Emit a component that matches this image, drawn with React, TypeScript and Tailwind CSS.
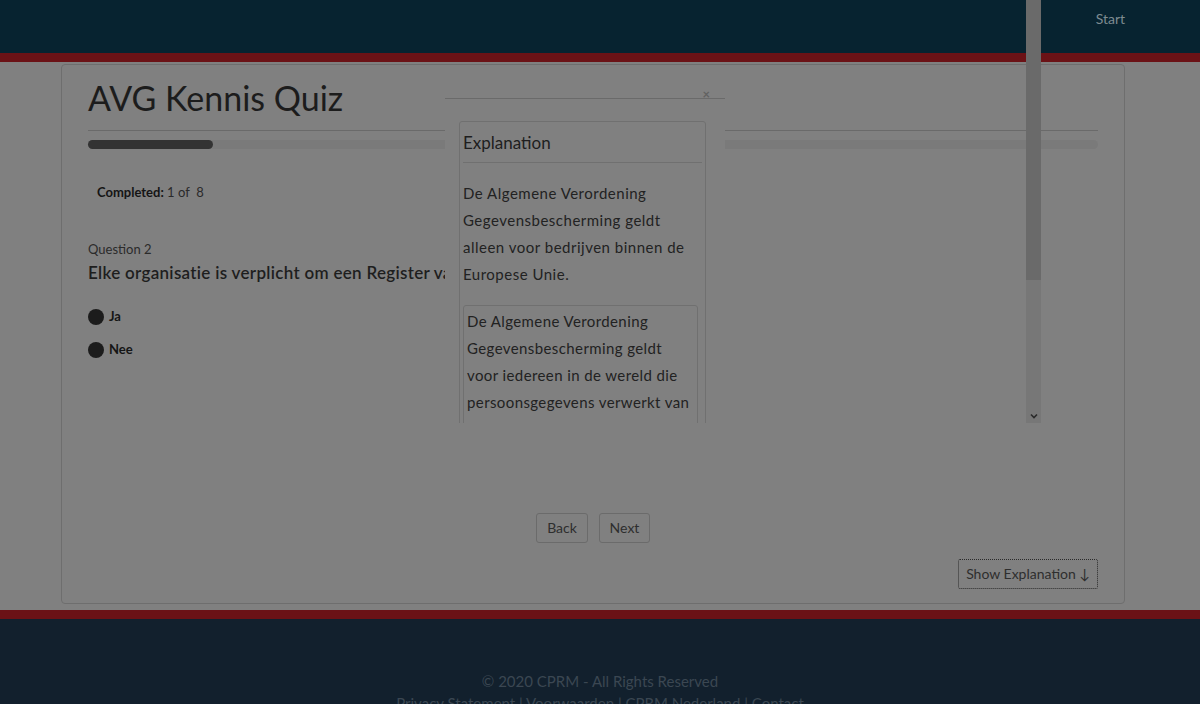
import React from "react";

const font = { fontFamily: "Lato, 'Open Sans', sans-serif" };

function Radio({ label }: { label: string }) {
  return (
    <label className="flex items-center gap-[5px] h-[20px]">
      <span className="w-[16px] h-[16px] rounded-full bg-[#1c1c1c]" />
      <span className="text-[13px] font-bold text-[#151515]">{label}</span>
    </label>
  );
}

function ExplanationModal() {
  return (
    <>
      <div className="absolute left-[445px] top-[66px] w-[280px] h-[357px] overflow-hidden bg-[#808080]">
        <div className="relative h-[33px] border-b border-[#6a6a6a]">
          <span className="absolute right-[15px] top-[22px] text-[13px] leading-none text-[#626262] font-bold">×</span>
        </div>
        <div className="ml-[14px] mt-[22px] w-[247px] border border-[#707070] rounded-[3px] px-[3px]">
          <div className="h-[41px] pt-[2px] flex items-center border-b border-[#707070] text-[17px] text-[#1e1e1e]">
            Explanation
          </div>
          <p className="pt-[17px] text-[15px] leading-[27px] tracking-[0.5px] text-[#222]">
            De Algemene Verordening Gegevensbescherming geldt alleen voor bedrijven binnen de Europese Unie.
          </p>
          <div className="mt-[17px] mr-[4px] border border-[#707070] rounded-[3px] px-[3px] pt-[2px]">
            <p className="text-[15px] leading-[27px] tracking-[0.4px] text-[#222]">
              De Algemene Verordening Gegevensbescherming geldt voor iedereen in de wereld die persoonsgegevens verwerkt van inwoners van de Europese Unie.
            </p>
          </div>
        </div>
      </div>

      {/* scrollbar of the modal */}
      <div className="absolute left-[1026px] top-0 w-[15px] h-[423px] bg-[#777777] flex flex-col">
        <div className="h-[280px] bg-[#6a6a6a]" />
        <div className="flex-1" />
        <div className="h-[15px] flex items-center justify-center">
          <svg width="8" height="6" viewBox="0 0 8 6">
            <path d="M1 1.5 L4 4.5 L7 1.5" fill="none" stroke="#2a2a2a" strokeWidth="1.6" />
          </svg>
        </div>
      </div>
    </>
  );
}

export default function App() {
  return (
    <div className="relative w-[1200px] h-[704px] overflow-hidden bg-[#808080]" style={font}>
      {/* Header */}
      <header className="h-[53px] bg-[#072330] flex items-center justify-end pr-[75px]">
        <span className="text-[14px] text-[#7e8b90] -mt-[17px]">Start</span>
      </header>
      <div className="h-[9px] bg-[#6b1216]" />

      {/* Main */}
      <main className="h-[548px] pt-[2px] px-[61px] pr-[75px]">
        <div className="h-[540px] border border-[#6e6e6e] rounded-[4px] px-[26px] pt-[13px] flex flex-col">
          <h1 className="text-[34px] leading-[40px] text-[#1c1c1c]">AVG Kennis Quiz</h1>
          <div className="mt-[12px] border-t border-[#6a6a6a]" />
          <div className="mt-[9px] h-[9px] rounded-full bg-[#7a7a7a]">
            <div className="h-full w-[125px] rounded-full bg-[#333333]" />
          </div>

          <p className="mt-[34px] ml-[9px] text-[13px] text-[#151515]">
            <span className="font-bold">Completed:</span> <span className="text-[#2a2a2a]">1 of&nbsp; 8</span>
          </p>

          <p className="mt-[37px] text-[13px] text-[#2b2b2b]">Question 2</p>
          <p className="mt-[1px] text-[17px] font-semibold text-[#1e1e1e] whitespace-nowrap tracking-[0.3px]">
            Elke organisatie is verplicht om een Register van verwerkingen bijhouden.
          </p>

          <div className="mt-[21px] flex flex-col gap-[13px]">
            <Radio label="Ja" />
            <Radio label="Nee" />
          </div>

          <div className="mt-[153px] flex justify-center gap-[11px]">
            <button className="h-[30px] w-[52px] border border-[#6b6b6b] rounded-[3px] text-[14px] text-[#2e2e2e]">Back</button>
            <button className="h-[30px] w-[51px] border border-[#6b6b6b] rounded-[3px] text-[14px] text-[#2e2e2e]">Next</button>
          </div>

          <div className="mt-[16px] flex justify-end">
            <button className="h-[30px] w-[140px] border border-dotted border-[#2a2a2a] rounded-[2px] text-[14px] text-[#2e2e2e]">
              Show Explanation ↓
            </button>
          </div>
        </div>
      </main>

      {/* Footer */}
      <div className="h-[9px] bg-[#6b1216]" />
      <footer className="h-[85px] bg-[#12202d] flex flex-col items-center pt-[53px]">
        <p className="text-[15px] leading-[18px] text-[#3b4752]">© 2020 CPRM - All Rights Reserved</p>
        <p className="mt-[4px] text-[15px] leading-[18px] text-[#3b4752] whitespace-nowrap">
          Privacy Statement | Voorwaarden | CPRM Nederland | Contact
        </p>
      </footer>

      <ExplanationModal />
    </div>
  );
}
